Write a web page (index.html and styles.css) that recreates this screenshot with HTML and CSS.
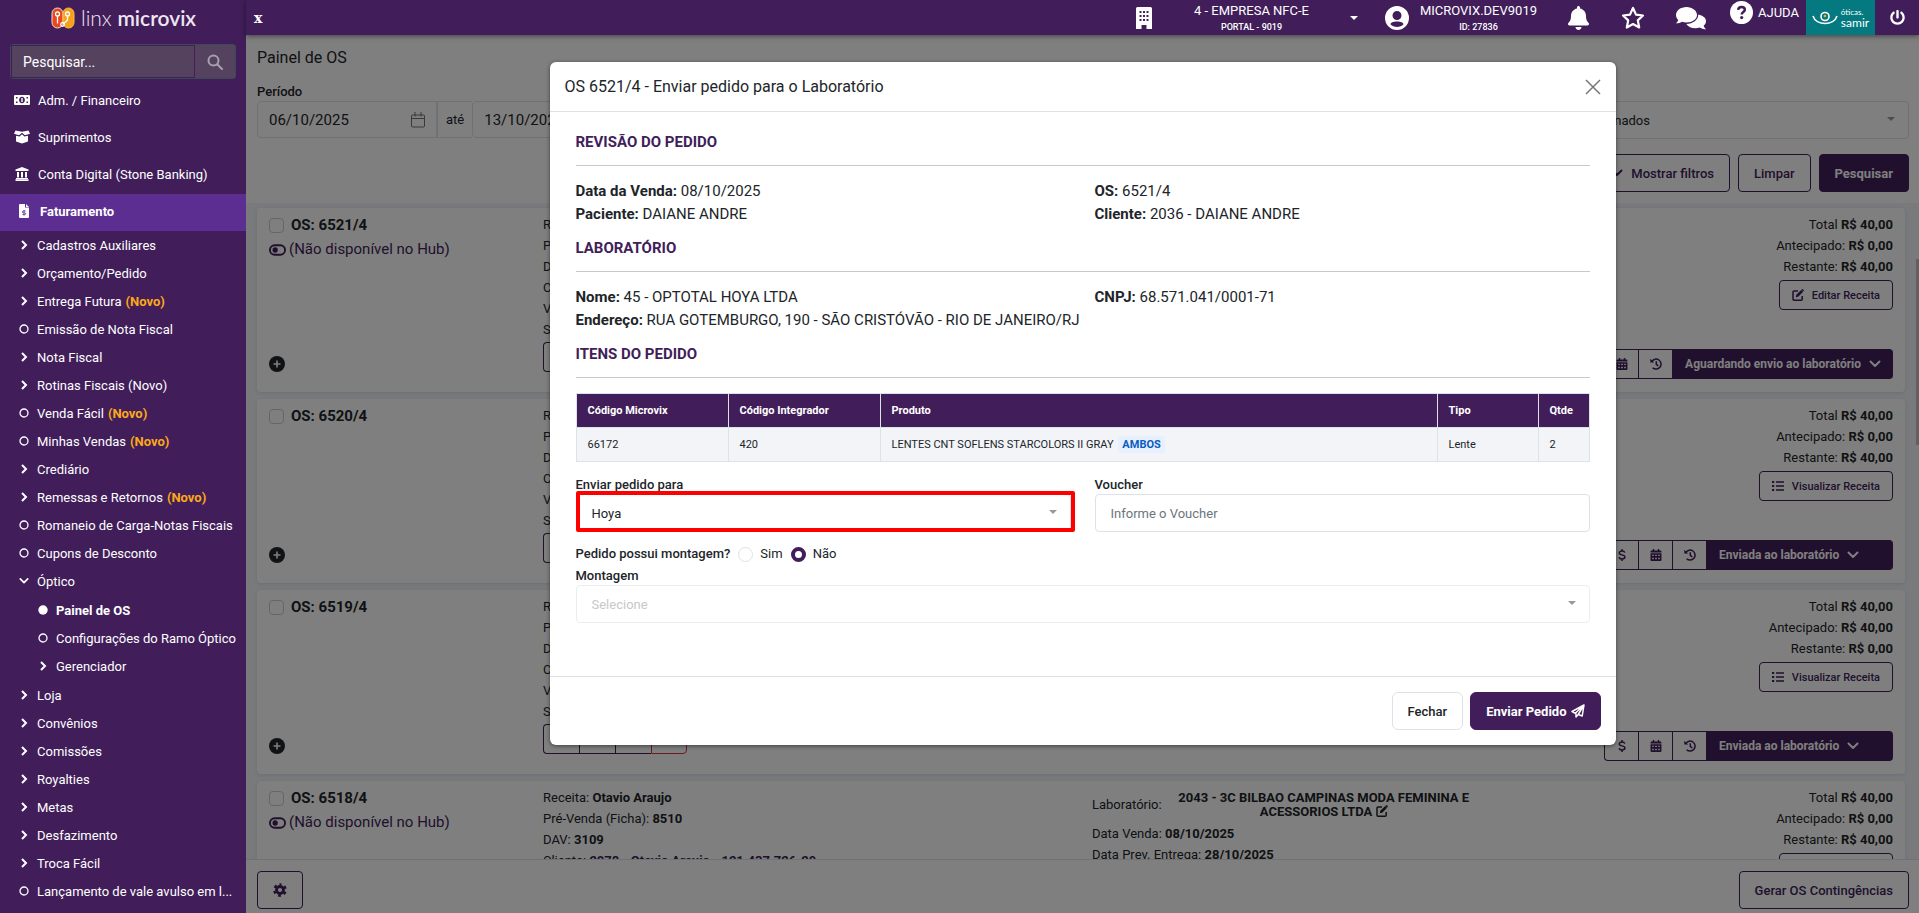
FILE: index.html
```html
<!DOCTYPE html>
<html lang="pt-BR">
<head>
    <meta charset="UTF-8">
    <meta name="viewport" content="width=device-width, initial-scale=1.0">
    <title>Painel de OS - Linx Microvix</title>
    <link rel="stylesheet" href="styles.css">
</head>
<body>
    <!-- icones -->
    <svg class="sprite" aria-hidden="true">
        <symbol id="i-right" viewBox="0 0 10 10"><path d="M3 1l4 4-4 4" fill="none" stroke="currentColor" stroke-width="2"/></symbol>
        <symbol id="i-down" viewBox="0 0 12 8"><path d="M1.5 1.5L6 6l4.500-4.500" fill="none" stroke="currentColor" stroke-width="2" stroke-linecap="round" stroke-linejoin="round"/></symbol>
        <symbol id="i-circle" viewBox="0 0 10 10"><circle cx="5" cy="5" r="4" fill="none" stroke="currentColor" stroke-width="1.300"/></symbol>
        <symbol id="i-dot" viewBox="0 0 10 10"><circle cx="5" cy="5" r="4.700" fill="currentColor"/></symbol>
        <symbol id="i-search" viewBox="0 0 16 16"><g fill="none" stroke="currentColor" stroke-width="2"><circle cx="6.500" cy="6.500" r="5"/><path d="M10.500 10.500l4.500 4.500" stroke-linecap="round"/></g></symbol>
        <symbol id="i-money" viewBox="0 0 16 12"><path fill="currentColor" fill-rule="evenodd" d="M1 1h14a1 1 0 0 1 1 1v8a1 1 0 0 1-1 1H1a1 1 0 0 1-1-1V2a1 1 0 0 1 1-1zm1 2v1.500h1.500V3zm10.500 0v1.500H14V3zM2 7.500V9h1.500V7.500zm10.500 0V9H14V7.500zM8 2.800c-1.700 0-2.900 1.400-2.900 3.200S6.300 9.200 8 9.200s2.900-1.400 2.900-3.200S9.700 2.800 8 2.800z"/><path fill="currentColor" d="M7.300 4h1.400v4H7.300z"/></symbol>
        <symbol id="i-box" viewBox="0 0 16 13"><path fill="currentColor" d="M1.500 0L8 1.200 14.500 0 16 3.200l-5 1.500L8 2.300 5 4.700 0 3.200zM2 5.200L5.500 6 8 3.800 10.500 6 14 5.200V11l-6 2-6-2z"/></symbol>
        <symbol id="i-bank" viewBox="0 0 14 14"><path fill="currentColor" d="M7 0l6.500 2.600V4H.5V2.600zM2 5h2v5.500H2zm4 0h2v5.500H6zm4 0h2v5.500h-2zM1 11h12v1H1zm-.5 1.300h13V14H.5z"/></symbol>
        <symbol id="i-file" viewBox="0 0 10 14"><path fill="currentColor" d="M1 0h5v3.500h4V13a1 1 0 0 1-1 1H1a1 1 0 0 1-1-1V1a1 1 0 0 1 1-1zm6 0l3 3H7z"/><path d="M6.600 7H4.300a.9.900 0 0 0 0 1.800h1.400a.9.900 0 0 1 0 1.800H3.400M5 6v5.500" fill="none" stroke="#5c2e91" stroke-width=".8"/></symbol>
        <symbol id="i-building" viewBox="0 0 16 22"><path fill="currentColor" fill-rule="evenodd" d="M1.500 0h13A1.500 1.500 0 0 1 16 1.500V22h-5.500v-4h-5v4H0V1.500A1.500 1.500 0 0 1 1.500 0zM3.500 4v2h2V4zm3.500 0v2h2V4zm3.500 0v2h2V4zm-7 4v2h2V8zM7 8v2h2V8zm3.500 0v2h2V8zm-7 4v2h2v-2zM7 12v2h2v-2zm3.500 0v2h2v-2z"/></symbol>
        <symbol id="i-caret" viewBox="0 0 8 4"><path fill="currentColor" d="M0 0h8L4 4z"/></symbol>
        <symbol id="i-user" viewBox="0 0 24 24"><path fill="currentColor" fill-rule="evenodd" d="M12 0a12 12 0 1 1 0 24 12 12 0 0 1 0-24zm0 5a4.500 4.500 0 1 0 0 9 4.500 4.500 0 0 0 0-9zm0 10.500c-4 0-6.500 1.400-6.500 2.800 1.500 1.700 4 2.700 6.500 2.700s5-1 6.500-2.700c0-1.400-2.500-2.800-6.500-2.800z"/></symbol>
        <symbol id="i-bell" viewBox="0 0 448 512"><path fill="currentColor" d="M224 512c35.320 0 63.970-28.650 63.970-64H160.030c0 35.350 28.650 64 63.970 64zm215.390-149.710c-19.320-20.760-55.470-51.990-55.470-154.290 0-77.700-54.480-139.900-127.940-155.160V32c0-17.670-14.320-32-31.980-32s-31.980 14.330-31.980 32v20.840C118.560 68.100 64.080 130.300 64.080 208c0 102.300-36.150 133.530-55.470 154.290-6 6.450-8.660 14.160-8.610 21.710.11 16.400 12.980 32 32.100 32h383.800c19.120 0 32-15.600 32.100-32 .05-7.550-2.610-15.270-8.610-21.710z"/></symbol>
        <symbol id="i-star" viewBox="0 0 24 24"><path fill="none" stroke="currentColor" stroke-width="2.200" stroke-linejoin="round" d="M12 2l3 6.600 7 .9-5.200 4.900 1.400 7.100L12 18l-6.200 3.500 1.400-7.100L2 9.500l7-.9z"/></symbol>
        <symbol id="i-chat" viewBox="0 0 30 24"><path fill="currentColor" d="M10.500 1C4.700 1 0 4.600 0 9c0 2 .9 3.700 2.300 5.100-.5 1.300-1.300 2.400-2.200 3.300 2.200 0 4.200-.7 5.800-1.700 1.400.5 3 .8 4.600.8C16.300 16.500 21 13.300 21 9s-4.700-8-10.500-8z"/><path fill="currentColor" d="M22.300 8.500c0 5.400-5.300 9.400-12 9.400 1.700 2.700 5.200 4.400 9.200 4.400 1.500 0 3-.3 4.300-.8 1.700 1.100 3.700 1.800 6.200 1.800-1-.9-1.900-2.100-2.400-3.500 1.500-1.300 2.400-3 2.400-4.900 0-2.900-3.100-5.400-7.700-6.400z"/></symbol>
        <symbol id="i-help" viewBox="0 0 24 24"><circle cx="12" cy="12" r="12" fill="currentColor"/><path d="M8.500 9.200c.2-2 1.600-3 3.500-3 2 0 3.500 1.100 3.500 2.900 0 2.400-3.300 2.500-3.300 5" fill="none" stroke="#411e5a" stroke-width="2.600"/><circle cx="12.200" cy="17.300" r="1.700" fill="#411e5a"/></symbol>
        <symbol id="i-power" viewBox="0 0 512 512"><path fill="currentColor" d="M400 54.100c63 45 104 118.600 104 201.900 0 136.800-110.800 247.700-247.500 248C120 504.300 8.200 393 8 256.400 7.900 173.100 48.900 99.300 111.800 54.200c11.700-8.300 28-4.800 35 7.700L162.600 90c5.900 10.500 3.100 23.800-6.600 31-41.500 30.800-68 79.600-68 134.900-.1 92.300 74.500 168.100 168 168.100 91.600 0 168.600-74.200 168-169.100-.3-51.800-24.700-101.800-68.100-134-9.700-7.200-12.400-20.500-6.500-30.900l15.800-28.100c7-12.400 23.200-16.100 34.800-7.800zM296 264V24c0-13.300-10.700-24-24-24h-32c-13.300 0-24 10.700-24 24v240c0 13.300 10.700 24 24 24h32c13.300 0 24-10.700 24-24z"/></symbol>
        <symbol id="i-calendar-o" viewBox="0 0 14 16"><path fill="none" stroke="currentColor" d="M1.500 3h11a1 1 0 0 1 1 1v10a1 1 0 0 1-1 1h-11a1 1 0 0 1-1-1V4a1 1 0 0 1 1-1zM.5 6.500h13M4 0v4.500M10 0v4.500"/></symbol>
        <symbol id="i-toggle" viewBox="0 0 18 12"><rect x="1" y="1" width="16" height="10" rx="5" fill="none" stroke="currentColor" stroke-width="2"/><circle cx="6.500" cy="6" r="2.800" fill="currentColor"/></symbol>
        <symbol id="i-plus" viewBox="0 0 16 16"><circle cx="8" cy="8" r="8" fill="currentColor"/><path d="M8 4.500v7M4.500 8h7" stroke="#fff" stroke-width="1.600"/></symbol>
        <symbol id="i-edit" viewBox="0 0 12 12"><path fill="none" stroke="currentColor" stroke-width="1.500" d="M6 2H2a1 1 0 0 0-1 1v7.200a1 1 0 0 0 1 1h7.200a1 1 0 0 0 1-1V7"/><path fill="currentColor" d="M9.200.9l1.900 1.900L6.200 7.700l-2.400.5.500-2.400zM9.900.3c.3-.3.700-.3 1 0l.8.800c.3.300.3.700 0 1l-.4.400-1.800-1.800z"/></symbol>
        <symbol id="i-list" viewBox="0 0 12 12"><path fill="currentColor" d="M0 1h2.200v2H0zm0 4h2.200v2H0zm0 4h2.200v2H0zm4-7.700h8v1.400H4zm0 4h8v1.400H4zm0 4h8v1.400H4z"/></symbol>
        <symbol id="i-dollar" viewBox="0 0 8 12"><path fill="none" stroke="currentColor" stroke-width="1.500" d="M6.800 3.600C6.500 2.600 5.400 2.100 4 2.100c-1.600 0-2.700.7-2.700 1.900C1.300 6.700 6.900 5 6.900 8c0 1.200-1.200 1.900-2.900 1.900-1.600 0-2.700-.6-3-1.700M4 0v2.200M4 9.800V12"/></symbol>
        <symbol id="i-calendar" viewBox="0 0 10 11"><path fill="currentColor" fill-rule="evenodd" d="M2 0h1.400v1.300h3.200V0H8v1.300h1a1 1 0 0 1 1 1v.9H0v-.9a1 1 0 0 1 1-1h1zM0 4h10v6a1 1 0 0 1-1 1H1a1 1 0 0 1-1-1zm1.500 1.200v1.300H3V5.200zm2.700 0v1.300h1.600V5.200zm2.800 0v1.300h1.500V5.200zM1.500 8v1.300H3V8zm2.700 0v1.300h1.600V8zM7 8v1.300h1.500V8z"/></symbol>
        <symbol id="i-history" viewBox="0 0 12 12"><path fill="none" stroke="currentColor" stroke-width="1.500" d="M1.800 3.400A5 5 0 1 1 2.600 9.700M6.300 3.300v3L8.300 8"/><path fill="currentColor" d="M.3.800l3.900 3.700H.3z"/></symbol>
        <symbol id="i-cog" viewBox="0 0 16 16"><path fill="none" stroke="currentColor" stroke-width="2.600" stroke-dasharray="3.300 3.500" d="M8 1.500a6.500 6.500 0 1 1 0 13 6.500 6.500 0 1 1 0-13" stroke-dashoffset="1.600"/><circle cx="8" cy="8" r="4" fill="none" stroke="currentColor" stroke-width="3.200"/></symbol>
        <symbol id="i-close" viewBox="0 0 16 16"><path d="M1 1l14 14M15 1L1 15" stroke="currentColor" stroke-width="1.500"/></symbol>
        <symbol id="i-send" viewBox="0 0 14 14"><path fill="none" stroke="currentColor" stroke-width="1.500" stroke-linejoin="round" d="M13 1L1 7.500l3.300 1.800L13 1l-1.800 11-4-1.500L13 1M5 9.600V13l2.200-2.400"/></symbol>
    </svg>

    <div class="app">
        <nav class="sidebar">
            <div class="brand">
                <svg class="brand-mark" viewBox="0 0 24 22">
                    <rect x="1" y="1" width="11" height="20" rx="5.500" fill="#e8481c" stroke="#e9dfe9"/>
                    <rect x="12" y="1" width="11" height="20" rx="5.500" fill="#f7a11a" stroke="#f7c04a"/>
                    <g fill="none" stroke="#fff" stroke-width="1.300"><circle cx="6.500" cy="7" r="2"/><path d="M6.500 9v7.500"/><circle cx="16.500" cy="7" r="2"/><path d="M16.500 9v4l-4 4"/><circle cx="11.500" cy="17.500" r="1.800"/></g>
                </svg>
                <span class="brand-name">linx <b>microvix</b></span>
            </div>
            <div class="search">
                <input type="text" placeholder="Pesquisar..." aria-label="Pesquisar">
                <button type="button" aria-label="Buscar"><svg><use href="#i-search"/></svg></button>
            </div>
            <ul class="menu">
                <li><a href="#"><svg><use href="#i-money"/></svg>Adm. / Financeiro</a></li>
                <li><a href="#"><svg><use href="#i-box"/></svg>Suprimentos</a></li>
                <li><a href="#"><svg><use href="#i-bank"/></svg>Conta Digital (Stone Banking)</a></li>
                <li><a href="#" class="active"><svg><use href="#i-file"/></svg>Faturamento</a></li>
            </ul>
            <ul class="submenu">
                <li><a href="#"><svg><use href="#i-right"/></svg>Cadastros Auxiliares</a></li>
                <li><a href="#"><svg><use href="#i-right"/></svg>Orçamento/Pedido</a></li>
                <li><a href="#"><svg><use href="#i-right"/></svg>Entrega Futura <b>(Novo)</b></a></li>
                <li><a href="#"><svg><use href="#i-circle"/></svg>Emissão de Nota Fiscal</a></li>
                <li><a href="#"><svg><use href="#i-right"/></svg>Nota Fiscal</a></li>
                <li><a href="#"><svg><use href="#i-right"/></svg>Rotinas Fiscais (Novo)</a></li>
                <li><a href="#"><svg><use href="#i-circle"/></svg>Venda Fácil <b>(Novo)</b></a></li>
                <li><a href="#"><svg><use href="#i-circle"/></svg>Minhas Vendas <b>(Novo)</b></a></li>
                <li><a href="#"><svg><use href="#i-right"/></svg>Crediário</a></li>
                <li><a href="#"><svg><use href="#i-right"/></svg>Remessas e Retornos <b>(Novo)</b></a></li>
                <li><a href="#"><svg><use href="#i-circle"/></svg>Romaneio de Carga-Notas Fiscais</a></li>
                <li><a href="#"><svg><use href="#i-circle"/></svg>Cupons de Desconto</a></li>
                <li>
                    <a href="#"><svg><use href="#i-down"/></svg>Óptico</a>
                    <ul>
                        <li><a href="#" class="current"><svg><use href="#i-dot"/></svg>Painel de OS</a></li>
                        <li><a href="#"><svg><use href="#i-circle"/></svg>Configurações do Ramo Óptico</a></li>
                        <li><a href="#"><svg><use href="#i-right"/></svg>Gerenciador</a></li>
                    </ul>
                </li>
                <li><a href="#"><svg><use href="#i-right"/></svg>Loja</a></li>
                <li><a href="#"><svg><use href="#i-right"/></svg>Convênios</a></li>
                <li><a href="#"><svg><use href="#i-right"/></svg>Comissões</a></li>
                <li><a href="#"><svg><use href="#i-right"/></svg>Royalties</a></li>
                <li><a href="#"><svg><use href="#i-right"/></svg>Metas</a></li>
                <li><a href="#"><svg><use href="#i-right"/></svg>Desfazimento</a></li>
                <li><a href="#"><svg><use href="#i-right"/></svg>Troca Fácil</a></li>
                <li><a href="#"><svg><use href="#i-circle"/></svg>Lançamento de vale avulso em l...</a></li>
            </ul>
        </nav>

        <div class="main">
            <header class="topbar">
                <button type="button" class="collapse" aria-label="Recolher menu">x</button>
                <svg class="ic-building"><use href="#i-building"/></svg>
                <div class="info company"><span>4 - EMPRESA NFC-E</span><small>PORTAL - 9019</small></div>
                <svg class="ic-caret"><use href="#i-caret"/></svg>
                <div class="user">
                    <svg><use href="#i-user"/></svg>
                    <div class="info"><span>MICROVIX.DEV9019</span><small>ID: 27836</small></div>
                </div>
                <svg class="ic-bell"><use href="#i-bell"/></svg>
                <svg class="ic-star"><use href="#i-star"/></svg>
                <svg class="ic-chat"><use href="#i-chat"/></svg>
                <a href="#" class="help"><svg><use href="#i-help"/></svg>AJUDA</a>
                <div class="client">
                    <svg viewBox="0 0 26 14"><g fill="none" stroke="#fff" stroke-width="1.600"><path d="M1 5c3 10 21 10 24 0"/><circle cx="13" cy="5.500" r="4"/></g><circle cx="13" cy="5" r="1.300" fill="#e6b422"/></svg>
                    <div class="client-name"><span>óticas.</span><b>samir</b></div>
                </div>
                <svg class="ic-power"><use href="#i-power"/></svg>
            </header>

            <div class="content">
                <section class="filters">
                    <h1>Painel de OS</h1>
                    <label for="inicio">Período</label>
                    <div class="filter-row">
                        <div class="period">
                            <div class="date"><input type="text" id="inicio" value="06/10/2025"><svg><use href="#i-calendar-o"/></svg></div>
                            <span class="until">até</span>
                            <div class="date"><input type="text" value="13/10/2025" aria-label="Até"><svg><use href="#i-calendar-o"/></svg></div>
                        </div>
                        <div class="select-wrap status"><select aria-label="Status"><option>Todos selecionados</option></select><svg><use href="#i-caret"/></svg></div>
                    </div>
                    <div class="filter-actions">
                        <button type="button" class="btn"><svg><use href="#i-down"/></svg>Mostrar filtros</button>
                        <button type="button" class="btn">Limpar</button>
                        <button type="button" class="btn btn-primary">Pesquisar</button>
                    </div>
                </section>

                <div class="list">
                    <article class="card">
                        <div class="os">
                            <label><input type="checkbox">OS: 6521/4</label>
                            <span class="hub"><svg><use href="#i-toggle"/></svg>(Não disponível no Hub)</span>
                            <svg class="plus"><use href="#i-plus"/></svg>
                        </div>
                        <div class="data">
                            <p>Receita:</p><p>Pré-Venda:</p><p>DAV:</p><p>Cliente:</p><p>Vendedor:</p><p>Situação:</p>
                            <div class="tools"><button type="button" aria-label="Imprimir"></button></div>
                        </div>
                        <div class="data"></div>
                        <div class="totals">
                            <p>Total <b>R$ 40,00</b></p>
                            <p>Antecipado: <b>R$ 0,00</b></p>
                            <p>Restante: <b>R$ 40,00</b></p>
                            <button type="button" class="btn btn-sm"><svg><use href="#i-edit"/></svg>Editar Receita</button>
                            <div class="tools">
                                <button type="button" aria-label="Calendário"><svg><use href="#i-calendar"/></svg></button>
                                <button type="button" aria-label="Histórico"><svg><use href="#i-history"/></svg></button>
                                <button type="button" class="state">Aguardando envio ao laboratório<svg><use href="#i-down"/></svg></button>
                            </div>
                        </div>
                    </article>

                    <article class="card">
                        <div class="os">
                            <label><input type="checkbox">OS: 6520/4</label>
                            <svg class="plus"><use href="#i-plus"/></svg>
                        </div>
                        <div class="data">
                            <p>Receita:</p><p>Pré-Venda:</p><p>DAV:</p><p>Cliente:</p><p>Vendedor:</p><p>Situação:</p>
                            <div class="tools"><button type="button" aria-label="Imprimir"></button></div>
                        </div>
                        <div class="data"></div>
                        <div class="totals">
                            <p>Total <b>R$ 40,00</b></p>
                            <p>Antecipado: <b>R$ 0,00</b></p>
                            <p>Restante: <b>R$ 40,00</b></p>
                            <button type="button" class="btn btn-sm"><svg><use href="#i-list"/></svg>Visualizar Receita</button>
                            <div class="tools">
                                <button type="button" aria-label="Pagamento"><svg><use href="#i-dollar"/></svg></button>
                                <button type="button" aria-label="Calendário"><svg><use href="#i-calendar"/></svg></button>
                                <button type="button" aria-label="Histórico"><svg><use href="#i-history"/></svg></button>
                                <button type="button" class="state sent">Enviada ao laboratório<svg><use href="#i-down"/></svg></button>
                            </div>
                        </div>
                    </article>

                    <article class="card">
                        <div class="os">
                            <label><input type="checkbox">OS: 6519/4</label>
                            <svg class="plus"><use href="#i-plus"/></svg>
                        </div>
                        <div class="data">
                            <p>Receita:</p><p>Pré-Venda:</p><p>DAV:</p><p>Cliente:</p><p>Vendedor:</p><p>Situação:</p>
                            <div class="tools">
                                <button type="button" aria-label="Imprimir"></button>
                                <button type="button" aria-label="Anexar"></button>
                                <button type="button" aria-label="Mensagem"></button>
                                <button type="button" class="danger" aria-label="Cancelar"></button>
                            </div>
                        </div>
                        <div class="data"></div>
                        <div class="totals">
                            <p>Total <b>R$ 40,00</b></p>
                            <p>Antecipado: <b>R$ 40,00</b></p>
                            <p>Restante: <b>R$ 0,00</b></p>
                            <button type="button" class="btn btn-sm"><svg><use href="#i-list"/></svg>Visualizar Receita</button>
                            <div class="tools">
                                <button type="button" aria-label="Pagamento"><svg><use href="#i-dollar"/></svg></button>
                                <button type="button" aria-label="Calendário"><svg><use href="#i-calendar"/></svg></button>
                                <button type="button" aria-label="Histórico"><svg><use href="#i-history"/></svg></button>
                                <button type="button" class="state sent">Enviada ao laboratório<svg><use href="#i-down"/></svg></button>
                            </div>
                        </div>
                    </article>

                    <article class="card">
                        <div class="os">
                            <label><input type="checkbox">OS: 6518/4</label>
                            <span class="hub"><svg><use href="#i-toggle"/></svg>(Não disponível no Hub)</span>
                            <svg class="plus"><use href="#i-plus"/></svg>
                        </div>
                        <div class="data">
                            <p>Receita: <b>Otavio Araujo</b></p>
                            <p>Pré-Venda (Ficha): <b>8510</b></p>
                            <p>DAV: <b>3109</b></p>
                            <p>Cliente: <a href="#">2078 - Otavio Araujo - 121.437.726-29</a></p>
                        </div>
                        <div class="data">
                            <div class="lab"><span>Laboratório:</span><b>2043 - 3C BILBAO CAMPINAS MODA FEMININA E ACESSORIOS LTDA <svg><use href="#i-edit"/></svg></b></div>
                            <p>Data Venda: <b>08/10/2025</b></p>
                            <p>Data Prev. Entrega: <b>28/10/2025</b></p>
                        </div>
                        <div class="totals">
                            <p>Total <b>R$ 40,00</b></p>
                            <p>Antecipado: <b>R$ 0,00</b></p>
                            <p>Restante: <b>R$ 40,00</b></p>
                            <button type="button" class="btn btn-sm"><svg><use href="#i-edit"/></svg>Editar Receita</button>
                        </div>
                    </article>
                    <span class="scroll-thumb"></span>
                </div>

                <footer class="page-footer">
                    <button type="button" class="btn" aria-label="Configurações"><svg class="cog"><use href="#i-cog"/></svg></button>
                    <button type="button" class="btn">Gerar OS Contingências</button>
                </footer>

                <div class="overlay">
                    <div class="modal" role="dialog" aria-labelledby="modal-title">
                        <div class="modal-header">
                            <h2 id="modal-title">OS 6521/4 - Enviar pedido para o Laboratório</h2>
                            <button type="button" class="close" aria-label="Fechar"><svg><use href="#i-close"/></svg></button>
                        </div>
                        <div class="modal-body">
                            <h3>REVISÃO DO PEDIDO</h3>
                            <div class="cols review">
                                <p><b>Data da Venda:</b> 08/10/2025</p>
                                <p><b>OS:</b> 6521/4</p>
                                <p><b>Paciente:</b> DAIANE ANDRE</p>
                                <p><b>Cliente:</b> 2036 - DAIANE ANDRE</p>
                            </div>
                            <h3>LABORATÓRIO</h3>
                            <div class="cols review">
                                <p><b>Nome:</b> 45 - OPTOTAL HOYA LTDA</p>
                                <p><b>CNPJ:</b> 68.571.041/0001-71</p>
                                <p class="full"><b>Endereço:</b> RUA GOTEMBURGO, 190 - SÃO CRISTÓVÃO - RIO DE JANEIRO/RJ</p>
                            </div>
                            <h3>ITENS DO PEDIDO</h3>
                            <table>
                                <thead>
                                    <tr><th class="c-code">Código Microvix</th><th class="c-code">Código Integrador</th><th>Produto</th><th class="c-type">Tipo</th><th class="c-qty">Qtde</th></tr>
                                </thead>
                                <tbody>
                                    <tr><td>66172</td><td>420</td><td>LENTES CNT SOFLENS STARCOLORS II GRAY <span class="tag">AMBOS</span></td><td>Lente</td><td>2</td></tr>
                                </tbody>
                            </table>
                            <div class="cols">
                                <div class="field">
                                    <label for="destino">Enviar pedido para</label>
                                    <div class="select-wrap highlight"><select id="destino"><option>Hoya</option></select><svg><use href="#i-caret"/></svg></div>
                                </div>
                                <div class="field">
                                    <label for="voucher">Voucher</label>
                                    <input type="text" id="voucher" placeholder="Informe o Voucher">
                                </div>
                            </div>
                            <div class="radios">
                                <span>Pedido possui montagem?</span>
                                <label><input type="radio" name="montagem">Sim</label>
                                <label><input type="radio" name="montagem" checked>Não</label>
                            </div>
                            <div class="field">
                                <label for="tipo-montagem">Montagem</label>
                                <div class="select-wrap"><select id="tipo-montagem" disabled><option>Selecione</option></select><svg><use href="#i-caret"/></svg></div>
                            </div>
                        </div>
                        <div class="modal-footer">
                            <button type="button" class="btn btn-light">Fechar</button>
                            <button type="button" class="btn btn-primary">Enviar Pedido<svg class="send"><use href="#i-send"/></svg></button>
                        </div>
                    </div>
                </div>
            </div>
        </div>
    </div>
</body>
</html>
```
FILE: styles.css
```css
* {
    box-sizing: border-box;
}

body {
    margin: 0;
    font-family: Roboto, "Liberation Sans", sans-serif;
    font-size: 13px;
    color: #212529;
    background-color: #fff;
}

h1, h2, h3, p, ul {
    margin: 0;
    padding: 0;
}

ul {
    list-style: none;
}

a {
    color: inherit;
    text-decoration: none;
}

svg {
    display: block;
    flex: none;
}

button, input, select {
    font: inherit;
    color: inherit;
}

b {
    font-weight: 700;
}

.sprite {
    position: absolute;
    width: 0;
    height: 0;
}

.app {
    display: flex;
    height: 100vh;
    overflow: hidden;
}

/* menu lateral */
.sidebar {
    width: 246px;
    flex: none;
    background-color: #411e5a;
    color: #fff;
    overflow: hidden;
}

.brand {
    display: flex;
    align-items: center;
    gap: 6px;
    height: 35px;
    padding-left: 51px;
}

.brand-mark {
    width: 24px;
    height: 22px;
}

.brand-name {
    font-family: Lato, sans-serif;
    font-weight: 300;
    font-size: 21px;
    color: #efe6f2;
    white-space: nowrap;
}

.brand-name b {
    font-weight: 600;
}

.search {
    display: flex;
    height: 35px;
    margin: 9px 10px 4px;
    border: 1px solid #3a4a56;
    border-radius: 3px;
    background-color: #54425f;
}

.search input {
    flex: 1;
    min-width: 0;
    padding: 0 11px;
    border: 1px solid #411e5a;
    background: none;
    font-size: 14px;
    outline: none;
}

.search input::placeholder {
    color: #fff;
    opacity: 1;
}

.search button {
    width: 40px;
    padding: 0 0 0 12px;
    border: none;
    background: none;
    color: #a79fae;
}

.search button svg {
    width: 16px;
    height: 16px;
}

.menu a {
    display: flex;
    align-items: center;
    height: 37px;
    padding: 0 0 3px 14px;
}

.menu svg {
    width: 16px;
    height: 14px;
    margin-right: 8px;
}

.menu .active {
    padding-left: 16px;
    background-color: #5c2e91;
    font-weight: 700;
}

.submenu a {
    display: flex;
    align-items: center;
    gap: 4px;
    height: 28px;
    padding-left: 19px;
    white-space: nowrap;
}

.submenu svg {
    width: 10px;
    height: 10px;
    margin-right: 4px;
}

.submenu b {
    color: #fba919;
}

.submenu ul {
    padding: 1px 0;
}

.submenu ul a {
    padding-left: 38px;
}

.submenu .current {
    font-weight: 700;
}

/* barra superior */
.main {
    display: flex;
    flex-direction: column;
    flex: 1;
    min-width: 0;
}

.topbar {
    display: flex;
    align-items: center;
    height: 35px;
    flex: none;
    padding: 0 14px 0 8px;
    background-color: #411e5a;
    color: #fff;
    box-shadow: 0 1px 5px rgba(0, 0, 0, 0.5);
    z-index: 2;
}

.collapse {
    margin-right: auto;
    padding: 0;
    border: none;
    background: none;
    font-family: "DejaVu Serif", serif;
    font-weight: 700;
    font-size: 14px;
}

.info {
    display: flex;
    flex-direction: column;
    align-items: center;
    gap: 3px;
    line-height: 15px;
    font-size: 13px;
    white-space: nowrap;
}

.info small {
    font-size: 9px;
    font-weight: 500;
    line-height: 12px;
}

.ic-building {
    width: 16px;
    height: 22px;
    margin-right: 40px;
}

.company {
    width: 119px;
    margin-right: 39px;
}

.ic-caret {
    width: 8px;
    height: 4px;
    margin-right: 27px;
}

.user {
    display: flex;
    align-items: center;
    justify-content: space-between;
    width: 152px;
    margin-right: 31px;
}

.user svg {
    width: 24px;
    height: 24px;
}

.ic-bell {
    width: 21px;
    height: 24px;
    margin-right: 32px;
}

.ic-star {
    width: 24px;
    height: 24px;
    margin-right: 31px;
}

.ic-chat {
    width: 30px;
    height: 24px;
    margin-right: 24px;
}

.help {
    display: flex;
    align-items: center;
    gap: 5px;
    width: 67px;
    height: 24px;
    margin-right: 9px;
    align-self: flex-start;
}

.help svg {
    width: 23px;
    height: 23px;
}

.client {
    display: flex;
    align-items: center;
    justify-content: center;
    gap: 3px;
    width: 69px;
    height: 35px;
    margin-right: 15px;
    background-color: #047a80;
}

.client svg {
    width: 26px;
    height: 14px;
}

.client-name {
    display: flex;
    flex-direction: column;
    font-family: Lato, sans-serif;
    font-size: 8px;
    line-height: 10px;
}

.client-name b {
    font-weight: 400;
    font-size: 12px;
    line-height: 12px;
}

.ic-power {
    width: 15px;
    height: 15px;
}

/* conteudo */
.content {
    position: relative;
    display: flex;
    flex-direction: column;
    flex: 1;
    min-height: 0;
}

.filters {
    padding: 12px 10px 11px 11px;
}

.filters h1 {
    margin-bottom: 14px;
    font-size: 16px;
    font-weight: 400;
    line-height: 22px;
}

.filters > label,
.field label {
    display: block;
    font-weight: 500;
    line-height: 18px;
}

.filter-row {
    display: flex;
    justify-content: space-between;
    margin-bottom: 15px;
}

.period {
    display: flex;
}

.date {
    display: flex;
    align-items: center;
    width: 180px;
    height: 37px;
    padding: 0 11px;
    border: 1px solid #dee2e6;
    border-radius: 4px 0 0 4px;
    font-size: 15px;
}

.date input {
    flex: 1;
    min-width: 0;
    padding: 0;
    border: none;
    background: none;
}

.date svg {
    width: 14px;
    height: 16px;
    color: #6c757d;
}

.until {
    display: flex;
    align-items: center;
    height: 37px;
    padding: 0 8px;
    border: 1px solid #dee2e6;
    border-right: none;
}

.select-wrap {
    position: relative;
}

.select-wrap select,
.field input {
    display: block;
    width: 100%;
    height: 38px;
    padding: 0 15px;
    border: 1px solid #dee2e6;
    border-radius: 4px;
    background-color: #fff;
    appearance: none;
    font-size: 13px;
}

.field input::placeholder {
    color: #6c757d;
}

.select-wrap svg {
    position: absolute;
    top: 16px;
    right: 14px;
    width: 8px;
    height: 4px;
    color: #999;
}

.status {
    width: 391px;
}

.filter-actions {
    display: flex;
    justify-content: flex-end;
    gap: 8px;
}

.btn {
    display: flex;
    align-items: center;
    justify-content: center;
    gap: 8px;
    height: 38px;
    padding: 0 15px;
    border: 1px solid #411e5a;
    border-radius: 4px;
    background-color: #fff;
    color: #411e5a;
    font-weight: 500;
    white-space: nowrap;
}

.btn svg {
    width: 12px;
    height: 12px;
}

.btn-primary {
    background-color: #411e5a;
    color: #fff;
    font-weight: 700;
}

.btn-light {
    border-color: #dee2e6;
    color: #212529;
}

.btn-sm {
    height: 30px;
    padding: 0 12px;
    font-size: 11px;
}

.list {
    position: relative;
    display: flex;
    flex-direction: column;
    gap: 7px;
    flex: 1;
    min-height: 0;
    padding: 5px 14px 0 11px;
    overflow: hidden;
    background-color: #f1f4f9;
}

.card {
    display: grid;
    grid-template-columns: 262px 1fr 1fr 252px;
    gap: 12px;
    flex: none;
    height: 184px;
    padding: 6px 12px 13px;
    border-radius: 4px;
    background-color: #fff;
    box-shadow: 0 1px 4px rgba(0, 0, 0, 0.1);
    line-height: 21px;
}

.os {
    display: flex;
    flex-direction: column;
    align-items: flex-start;
}

.os label {
    display: flex;
    align-items: center;
    gap: 7px;
    line-height: 23px;
    font-size: 15px;
    font-weight: 700;
}

.os input {
    width: 15px;
    height: 15px;
    margin: 0;
    border: 1px solid #c8ccd0;
    border-radius: 4px;
    appearance: none;
}

.hub {
    display: flex;
    align-items: center;
    gap: 3px;
    margin-top: 2px;
    font-size: 15px;
    color: #411e5a;
}

.hub svg {
    width: 17px;
    height: 12px;
}

.plus {
    width: 16px;
    height: 16px;
    margin-top: auto;
    margin-bottom: 7px;
}

.data a {
    color: #411e5a;
    font-weight: 700;
}

.data .tools {
    margin-top: 2px;
}

.lab {
    display: flex;
    align-items: center;
    gap: 14px;
    margin: 4px 0;
    line-height: 14px;
}

.lab b {
    width: 296px;
    text-align: center;
}

.lab svg {
    display: inline-block;
    width: 12px;
    height: 12px;
    vertical-align: -1px;
}

.totals {
    display: flex;
    flex-direction: column;
    align-items: flex-end;
}

.totals .btn-sm {
    margin-top: 3px;
}

.totals .tools {
    margin-top: auto;
}

.tools {
    display: flex;
    height: 30px;
}

.tools button {
    display: flex;
    align-items: center;
    justify-content: center;
    width: 34px;
    padding: 0;
    border: 1px solid #411e5a;
    border-right: none;
    background-color: #fff;
    color: #411e5a;
    white-space: nowrap;
}

.data .tools button {
    width: 36px;
}

.tools button:first-child {
    border-radius: 4px 0 0 4px;
}

.tools svg {
    width: 12px;
    height: 12px;
}

.tools .danger {
    border: 1px solid #dc3545;
    border-radius: 0 4px 4px 0;
}

.tools .state {
    gap: 8px;
    width: auto;
    padding: 0 12px;
    border-radius: 0 4px 4px 0;
    background-color: #411e5a;
    color: #fff;
    font-size: 12px;
    font-weight: 700;
}

.tools .sent {
    justify-content: flex-start;
    width: 187px;
}

.scroll-thumb {
    position: absolute;
    top: 56px;
    right: 0;
    width: 3px;
    height: 186px;
    background-color: #c1c1c1;
}

.page-footer {
    display: flex;
    justify-content: space-between;
    padding: 11px 10px 4px 11px;
    border-top: 1px solid #dee2e6;
    background-color: #fff;
}

.page-footer .cog {
    width: 14px;
    height: 14px;
}

/* modal */
.overlay {
    position: absolute;
    inset: 0;
    padding: 27px 16px;
    background-color: rgba(0, 0, 0, 0.5);
}

.modal {
    display: flex;
    flex-direction: column;
    max-width: 1066px;
    min-height: 683px;
    margin: 0 auto;
    border-radius: 6px;
    background-color: #fff;
    box-shadow: 0 1px 4px rgba(0, 0, 0, 0.5);
}

.modal-header {
    display: flex;
    align-items: center;
    justify-content: space-between;
    height: 50px;
    padding: 0 15px;
    border-bottom: 1px solid #dee2e6;
}

.modal-header h2 {
    font-size: 16px;
    font-weight: 400;
}

.close {
    padding: 0;
    border: none;
    background: none;
    color: #777;
}

.close svg {
    width: 16px;
    height: 16px;
}

.modal-body {
    flex: 1;
    padding: 19px 26px;
}

.modal-body h3 {
    margin-bottom: 14px;
    padding-bottom: 11px;
    border-bottom: 1px solid #c8c8cc;
    font-size: 15px;
    font-weight: 700;
    line-height: 23px;
    color: #411e5a;
}

.cols {
    display: grid;
    grid-template-columns: 1fr 1fr;
    column-gap: 24px;
}

.review {
    margin-bottom: 11px;
    font-size: 15px;
    line-height: 23px;
}

.full {
    grid-column: 1 / -1;
}

.modal table {
    width: 100%;
    margin: 15px 0 14px;
    border-collapse: collapse;
    table-layout: fixed;
    font-size: 11px;
}

.modal th,
.modal td {
    height: 34px;
    padding: 0 11px;
    border: 1px solid #dee2e6;
    text-align: left;
}

.modal th {
    background-color: #411e5a;
    color: #fff;
    font-weight: 700;
}

.modal td {
    background-color: #f2f4f8;
}

.c-code {
    width: 152px;
}

.c-type {
    width: 101px;
}

.c-qty {
    width: 51px;
}

.tag {
    margin-left: 2px;
    padding: 2px 4px;
    border-radius: 3px;
    background-color: #e7f0ff;
    color: #0a5cc0;
    font-weight: 700;
}

.highlight::after {
    content: "";
    position: absolute;
    inset: -3px -4px 0 0;
    border: 4px solid #f00;
    border-radius: 2px;
    pointer-events: none;
}

.radios {
    display: flex;
    align-items: center;
    gap: 8px;
    margin: 12px 0 3px;
    line-height: 20px;
}

.radios span {
    font-weight: 500;
}

.radios label {
    display: flex;
    align-items: center;
    gap: 7px;
}

.radios input {
    width: 15px;
    height: 15px;
    margin: 0;
    border: 1px solid #dee2e6;
    border-radius: 50%;
    appearance: none;
}

.radios input:checked {
    border: 4px solid #411e5a;
}

.field select:disabled {
    border-color: #ebedef;
    color: #c8c8c8;
    opacity: 1;
}

.modal-footer {
    display: flex;
    justify-content: flex-end;
    gap: 7px;
    padding: 15px;
    border-top: 1px solid #dee2e6;
}

.modal-footer .btn {
    gap: 4px;
    border-radius: 6px;
}

.modal-footer .send {
    width: 14px;
    height: 14px;
}
```
